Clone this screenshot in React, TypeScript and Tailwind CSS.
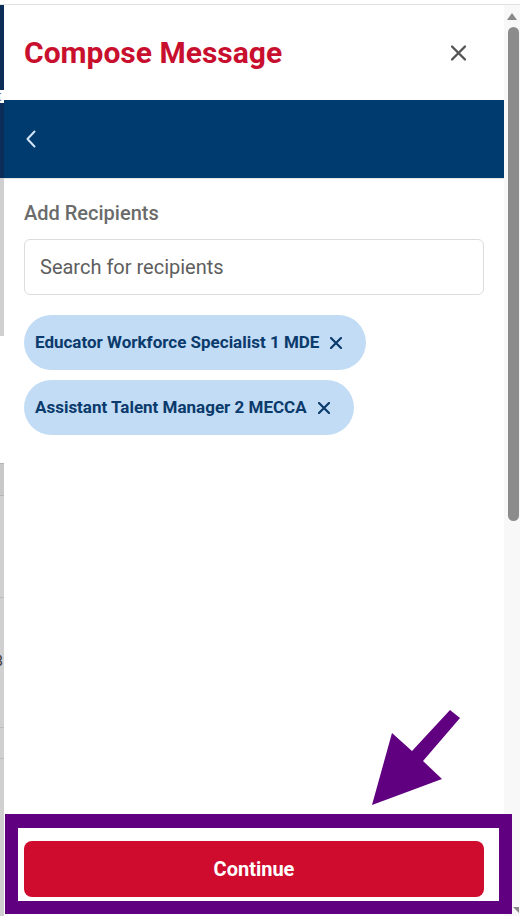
import React from "react";

function LeftStrip() {
  return (
    <div className="w-[4px] flex flex-col overflow-hidden shrink-0">
      <div className="h-[85px] bg-[#0c2d57]" />
      <div className="h-[13px] bg-white flex items-center overflow-hidden">
        <span className="-ml-[3px] text-[14px] leading-[13px] text-[#777] font-['Roboto',sans-serif]">t</span>
      </div>
      <div className="h-[75px] bg-[#0c2d57]" />
      <div className="h-[158px] bg-[#d0d0d0]" />
      <div className="h-[127px] bg-white" />
      <div className="h-px bg-[#b5b5b5]" />
      <div className="h-[31px] bg-[#c8c8c8]" />
      <div className="h-px bg-[#b5b5b5]" />
      <div className="h-[101px] bg-[#d0d0d0]" />
      <div className="h-px bg-[#bdbdbd]" />
      <div className="h-[56px] bg-[#d0d0d0]" />
      <div className="h-[14px] bg-[#d0d0d0] flex items-center overflow-hidden">
        <span className="-ml-[5px] text-[14px] leading-[14px] text-[#333] font-['Roboto',sans-serif]">3</span>
      </div>
      <div className="h-[59px] bg-[#d0d0d0]" />
      <div className="h-px bg-[#bdbdbd]" />
      <div className="h-[30px] bg-[#d0d0d0]" />
      <div className="h-px bg-[#bdbdbd]" />
      <div className="flex-1 bg-[#d0d0d0]" />
    </div>
  );
}

function Scrollbar() {
  return (
    <div className="w-[16px] shrink-0 bg-[#f8f8f8] flex flex-col items-start">
      <svg width="16" height="22" viewBox="0 0 16 22" className="shrink-0">
        <polygon points="3,15 8,8 13,15" fill="#8a8a8a" />
      </svg>
      <div className="ml-[4px] w-[11px] h-[494px] rounded-full bg-[#8c8c8c]" />
      <div className="flex-1" />
      <svg width="16" height="12" viewBox="0 0 16 12" className="shrink-0">
        <polygon points="9,3 15,3 15,9" fill="#8a8a8a" />
      </svg>
    </div>
  );
}

function Chip({ label }: { label: string }) {
  return (
    <div className="h-[55px] rounded-full bg-[#c1dcf4] flex items-center pl-[11px] pr-[24px] gap-[11px]">
      <span className="text-[17px] font-bold text-[#0b3a6c] whitespace-nowrap">{label}</span>
      <svg width="12" height="12" viewBox="0 0 12 12">
        <path d="M1 1 L11 11 M11 1 L1 11" stroke="#0b3a6c" strokeWidth="2.2" strokeLinecap="round" />
      </svg>
    </div>
  );
}

function Panel() {
  return (
    <div className="w-[500px] shrink-0 flex flex-col bg-white">
      <div className="h-[95px] flex items-center justify-between pl-[20px] pr-[38px]">
        <h1 className="text-[30px] font-bold text-[#c8102e] leading-none">Compose Message</h1>
        <svg width="15" height="16" viewBox="0 0 15 16">
          <path d="M1 1.5 L14 14.5 M14 1.5 L1 14.5" stroke="#555555" strokeWidth="2.4" strokeLinecap="round" />
        </svg>
      </div>
      <div className="h-[78px] bg-[#003b6f] flex items-center pl-[22px]">
        <svg width="10" height="18" viewBox="0 0 10 18">
          <path d="M8.5 1.5 L1.5 9 L8.5 16.5" fill="none" stroke="#d3e4f6" strokeWidth="2" strokeLinecap="round" strokeLinejoin="round" />
        </svg>
      </div>
      <div className="h-px bg-[#e5e5e5]" />
      <div className="px-[20px] pt-[22px] flex flex-col">
        <div className="text-[20px] leading-[24px] font-medium text-[#6b6b6b]">Add Recipients</div>
        <div className="mt-[14px] h-[56px] border border-[#dcdcdc] rounded-[6px] flex items-center pl-[15px]">
          <span className="text-[20px] text-[#5e5e5e]">Search for recipients</span>
        </div>
        <div className="mt-[20px] flex flex-col items-start gap-[10px]">
          <Chip label="Educator Workforce Specialist 1 MDE" />
          <Chip label="Assistant Talent Manager 2 MECCA" />
        </div>
      </div>
      <div className="flex-1" />
      <div className="px-[20px] pb-[19px]">
        <button className="w-full h-[56px] rounded-[8px] bg-[#d00c2e] text-white text-[20px] font-bold">
          Continue
        </button>
      </div>
    </div>
  );
}

export default function App() {
  return (
    <div className="relative w-[520px] h-[916px] overflow-hidden bg-white font-['Roboto',sans-serif]">
      <div className="h-[4px] bg-white" />
      <div className="h-px bg-[#e2e2e2]" />
      <div className="flex h-[911px]">
        <LeftStrip />
        <Panel />
        <Scrollbar />
      </div>
      <div className="absolute left-[5px] top-[814px] w-[507px] h-[100px] border-[13px] border-t-[14px] border-[#600080]" />
      <svg className="absolute left-0 top-0 pointer-events-none" width="520" height="916" viewBox="0 0 520 916">
        <polygon points="450,710 460,718 423,761 442,779 372,805 392,733 412,751" fill="#600080" />
      </svg>
    </div>
  );
}
